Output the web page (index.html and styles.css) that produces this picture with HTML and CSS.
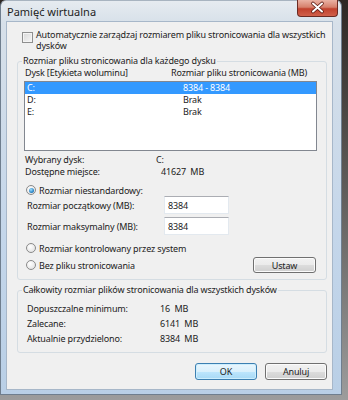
FILE: index.html
```html
<!DOCTYPE html>
<html lang="pl">
<head>
    <meta charset="UTF-8">
    <meta name="viewport" content="width=device-width, initial-scale=1.0">
    <title>Pamięć wirtualna</title>
    <link rel="stylesheet" href="styles.css">
</head>
<body>
    <div class="window">
        <div class="titlebar">
            <span class="title">Pamięć wirtualna</span>
            <span class="close">
                <svg width="41" height="17" viewBox="0 0 41 17">
                    <path d="M16 4.5 L25 12.5 M25 4.5 L16 12.5" stroke="#5b1a12" stroke-width="3.6" stroke-linecap="round"/>
                    <path d="M16 4.5 L25 12.5 M25 4.5 L16 12.5" stroke="#ffffff" stroke-width="2" stroke-linecap="round"/>
                </svg>
            </span>
        </div>

        <div class="client">
            <label class="auto">
                <span class="checkbox"></span>
                <span class="auto-text">Automatycznie zarządzaj rozmiarem pliku stronicowania dla wszystkich dysków</span>
            </label>

            <fieldset class="group group-disk">
                <legend>Rozmiar pliku stronicowania dla każdego dysku</legend>
                <div class="list-head">
                    <span class="head-drive">Dysk [Etykieta woluminu]</span>
                    <span>Rozmiar pliku stronicowania (MB)</span>
                </div>
                <div class="listbox">
                    <div class="list-row selected"><span class="row-drive">C:</span><span>8384 - 8384</span></div>
                    <div class="list-row"><span class="row-drive">D:</span><span>Brak</span></div>
                    <div class="list-row"><span class="row-drive">E:</span><span>Brak</span></div>
                </div>

                <div class="info-row first"><span class="info-label">Wybrany dysk:</span><span>C:</span></div>
                <div class="info-row"><span class="info-label">Dostępne miejsce:</span><span class="info-free">41627&nbsp; MB</span></div>

                <div class="radio-row first"><span class="radio on"></span>Rozmiar niestandardowy:</div>
                <div class="field-row"><span class="field-label">Rozmiar początkowy (MB):</span><input class="textbox" type="text" value="8384"></div>
                <div class="field-row"><span class="field-label">Rozmiar maksymalny (MB):</span><input class="textbox" type="text" value="8384"></div>
                <div class="radio-row second"><span class="radio"></span>Rozmiar kontrolowany przez system</div>
                <div class="radio-row third">
                    <span class="radio"></span>Bez pliku stronicowania
                    <button class="btn btn-set">Ustaw</button>
                </div>
            </fieldset>

            <fieldset class="group group-total">
                <legend>Całkowity rozmiar plików stronicowania dla wszystkich dysków</legend>
                <div class="total-row first"><span class="total-label">Dopuszczalne minimum:</span><span>16&nbsp; MB</span></div>
                <div class="total-row"><span class="total-label">Zalecane:</span><span>6141&nbsp; MB</span></div>
                <div class="total-row"><span class="total-label">Aktualnie przydzielono:</span><span>8384&nbsp; MB</span></div>
            </fieldset>

            <div class="actions">
                <button class="btn btn-default">OK</button>
                <button class="btn">Anuluj</button>
            </div>
        </div>
    </div>
</body>
</html>
```

FILE: styles.css
```css
body {
    margin: 0;
    height: 400px;
    background: linear-gradient(#2e2824, #5d5a58 45%, #9c9c9c);
    font-family: "Noto Sans", "Open Sans", sans-serif;
    font-size: 9px;
    letter-spacing: -0.15px;
    color: #222;
}
.window {
    box-sizing: border-box;
    width: 342px;
    height: 395px;
    display: flex;
    flex-direction: column;
    border: 1px solid #6f7e8e;
    border-top-color: #a8b4c0;
    border-radius: 6px 6px 0 0;
    background: linear-gradient(#e6ebf0, #d7e0e9 22px, #c4d6ea 60%, #b9cfe6);
}
.titlebar {
    height: 20px;
    display: flex;
    align-items: flex-start;
    padding-left: 6px;
}
.title {
    margin-top: 5px;
    font-size: 11px;
    line-height: 12px;
    letter-spacing: 0;
    color: #1e1e1e;
}
.close {
    margin-left: auto;
    margin-right: 3px;
    margin-top: -1px;
    width: 41px;
    height: 17px;
    border: 1px solid #6b2a22;
    border-top: none;
    border-radius: 0 0 4px 4px;
    box-sizing: border-box;
    background: linear-gradient(#eab2a4, #d6806c 45%, #c1412d 55%, #d0604a);
}
.close svg {
    display: block;
    margin: -1px 0 0 -1px;
}
.client {
    flex: 1;
    margin: 0 8px 4px 5px;
    border: 1px solid #a7b7c9;
    background: #f0f0f0;
}

/* auto checkbox */
.auto {
    display: flex;
    gap: 3px;
    padding: 7px 0 0 15px;
    line-height: 11px;
}
.checkbox {
    flex: none;
    width: 11px;
    height: 11px;
    margin-top: 3px;
    box-sizing: border-box;
    border: 1px solid #8e8f8f;
    background: linear-gradient(135deg, #d8d8d8, #f6f6f6);
    box-shadow: inset 0 0 0 1px #f4f4f4;
}

/* group boxes */
.group {
    margin: 4px 5px 0 10px;
    padding: 0;
    min-width: 0;
    border: 1px solid #d5dde3;
    border-radius: 3px;
}
.group legend {
    margin-left: 4px;
    padding: 0 1px;
    line-height: 12px;
}
.group-disk {
    padding-bottom: 6px;
}
.group-total {
    padding-bottom: 6px;
}

/* drive list */
.list-head {
    display: flex;
    height: 11px;
    line-height: 11px;
    padding-left: 7px;
}
.head-drive {
    width: 146px;
}
.listbox {
    box-sizing: border-box;
    height: 70px;
    margin: 3px 9px 0 6px;
    border: 1px solid #828790;
    background: #fff;
}
.list-row {
    display: flex;
    height: 12px;
    line-height: 12px;
    padding-left: 2px;
}
.list-row.selected {
    background: #3399ff;
    color: #fff;
}
.row-drive {
    width: 156px;
}

.info-row {
    display: flex;
    height: 12px;
    line-height: 12px;
    padding-left: 7px;
}
.info-row.first {
    margin-top: 3px;
}
.info-label {
    width: 131px;
}
.info-free {
    padding-left: 5px;
}

/* radios and fields */
.radio-row {
    display: flex;
    align-items: center;
    gap: 3px;
    height: 12px;
    padding-left: 8px;
    padding-right: 10px;
}
.radio-row.first {
    margin-top: 6px;
}
.radio-row.second {
    margin-top: 7px;
}
.radio-row.third {
    margin-top: 3px;
    height: 16px;
}
.radio {
    flex: none;
    box-sizing: border-box;
    width: 10px;
    height: 10px;
    border-radius: 50%;
    border: 1px solid #8a8a8a;
    background: radial-gradient(circle at 40% 35%, #ffffff, #dcdcdc);
    display: flex;
    align-items: center;
    justify-content: center;
}
.radio.on::after {
    content: "";
    width: 5px;
    height: 5px;
    border-radius: 50%;
    background: radial-gradient(circle at 40% 35%, #a4e1ff, #2a86c8 60%, #16577f);
}
.field-row {
    display: flex;
    align-items: center;
    height: 18px;
    padding-left: 9px;
}
.field-row + .field-row {
    margin-top: 3px;
}
.field-label {
    width: 137px;
}
.textbox {
    box-sizing: border-box;
    width: 65px;
    height: 18px;
    margin: 0;
    padding: 0 3px;
    border: 1px solid #e3e9ef;
    border-top-color: #abadb3;
    background: #fff;
    font: inherit;
    letter-spacing: inherit;
    color: #222;
}

/* totals */
.total-row {
    display: flex;
    height: 15px;
    line-height: 15px;
    padding-left: 9px;
}
.total-row.first {
    margin-top: 5px;
}
.total-label {
    width: 133px;
}

/* buttons */
.btn {
    box-sizing: border-box;
    width: 62px;
    height: 17px;
    padding: 0;
    border: 1px solid #707070;
    border-radius: 3px;
    background: linear-gradient(#f2f2f2, #ebebeb 50%, #dddddd 50%, #cfcfcf);
    box-shadow: inset 0 0 0 1px #fbfbfb;
    font: inherit;
    letter-spacing: inherit;
    color: #222;
}
.btn-set {
    margin-left: auto;
    width: 63px;
    height: 16px;
}
.btn-default {
    border-color: #3c7fb1;
    background: linear-gradient(#eaf6fd, #d9f0fc 50%, #bee6fd 50%, #a7d9f5);
    box-shadow: inset 0 0 0 1px #cdeefd;
}
.actions {
    display: flex;
    justify-content: flex-end;
    gap: 8px;
    margin: 10px 5px 0 0;
}
```
